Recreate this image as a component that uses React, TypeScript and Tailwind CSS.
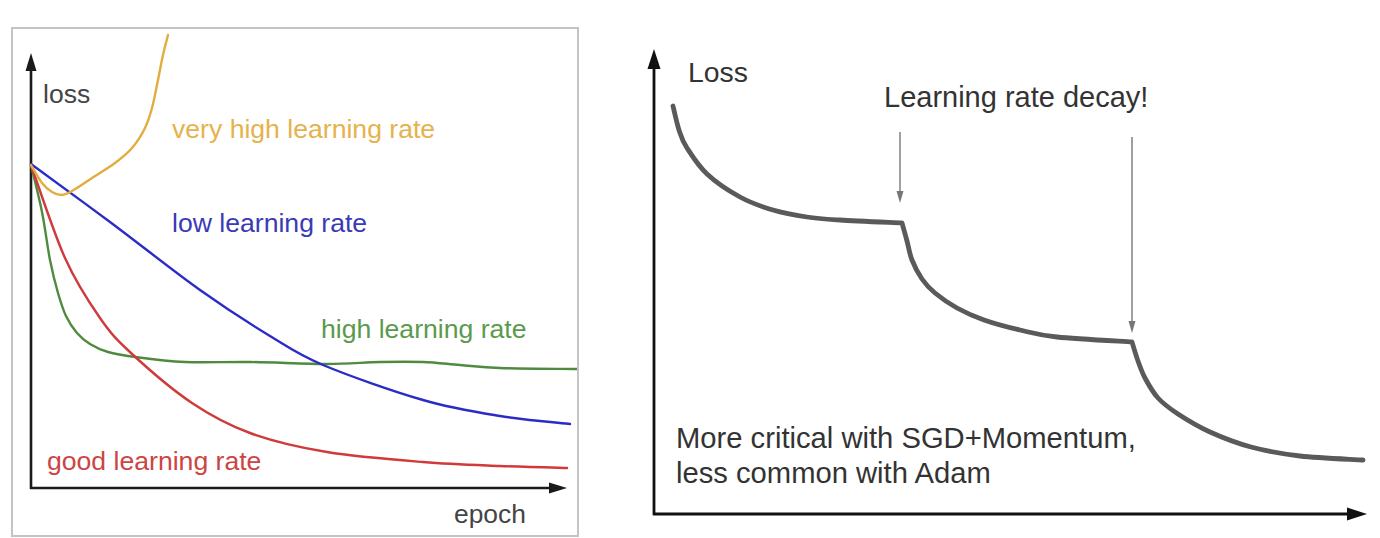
type Pt = [number, number];

// Catmull-Rom through the points, turned into cubic beziers
const smooth = (pts: Pt[], move = true) => {
  let d = move ? `M${pts[0][0]},${pts[0][1]}` : "";
  for (let i = 0; i < pts.length - 1; i++) {
    const p0 = pts[i - 1] || pts[i];
    const p1 = pts[i];
    const p2 = pts[i + 1];
    const p3 = pts[i + 2] || p2;
    const c1x = p1[0] + (p2[0] - p0[0]) / 6;
    const c1y = p1[1] + (p2[1] - p0[1]) / 6;
    const c2x = p2[0] - (p3[0] - p1[0]) / 6;
    const c2y = p2[1] - (p3[1] - p1[1]) / 6;
    d += ` C${c1x.toFixed(1)},${c1y.toFixed(1)} ${c2x.toFixed(1)},${c2y.toFixed(1)} ${p2[0]},${p2[1]}`;
  }
  return d;
};

const yellow: Pt[] = [
  [31, 165], [42, 183], [52, 192], [62, 195], [72, 191], [92, 178], [115, 163],
  [132, 148], [145, 128], [152, 108], [158, 80], [163, 55], [168, 35],
];
const blue: Pt[] = [
  [31, 164], [110, 222], [200, 290], [270, 336], [323, 365], [423, 400],
  [500, 416], [570, 424],
];
const green: Pt[] = [
  [31, 165], [42, 212], [50, 260], [58, 293], [66, 316], [77, 333], [90, 344],
  [108, 352], [135, 357], [185, 362], [250, 362], [327, 364], [380, 362],
  [423, 362], [460, 365], [500, 368], [577, 369],
];
const red: Pt[] = [
  [31, 165], [65, 258], [100, 318], [131, 353], [192, 403], [250, 433],
  [327, 452], [423, 462], [500, 466], [567, 468],
];

const stage1: Pt[] = [
  [673, 106], [679, 130], [687, 148], [707, 174], [740, 197], [773, 210],
  [807, 217], [840, 220], [902, 223],
];
const stage2: Pt[] = [
  [902, 223], [907, 241], [912, 260], [922, 279], [935, 293], [957, 308],
  [984, 320], [1020, 330], [1057, 337], [1132, 342],
];
const stage3: Pt[] = [
  [1132, 342], [1138, 361], [1145, 378], [1158, 398], [1178, 414], [1210, 432],
  [1251, 447], [1300, 456], [1363, 460],
];

const labelFont = { fontFamily: "'Liberation Sans', Arial, sans-serif" };

const LeftChart = () => (
  <div className="mt-[27px] ml-[11px] w-[568px] h-[510px] shrink-0 border-2 border-[#c4c4c4] bg-white">
    <svg width="564" height="506" viewBox="13 29 564 506" className="block" style={labelFont}>
      {/* axes */}
      <line x1="31" y1="489" x2="31" y2="66" stroke="#1a1a1a" strokeWidth="2.6" />
      <polygon points="31,53 25.5,71 36.5,71" fill="#1a1a1a" />
      <line x1="30" y1="488" x2="553" y2="488" stroke="#1a1a1a" strokeWidth="2.6" />
      <polygon points="567,488 549,482.5 549,493.5" fill="#1a1a1a" />

      <path d={smooth(green)} fill="none" stroke="#4f8b3f" strokeWidth="2.4" strokeLinecap="round" />
      <path d={smooth(red)} fill="none" stroke="#cf3a3a" strokeWidth="2.4" strokeLinecap="round" />
      <path d={smooth(blue)} fill="none" stroke="#2b2bc8" strokeWidth="2.4" strokeLinecap="round" />
      <path d={smooth(yellow)} fill="none" stroke="#e2ad3f" strokeWidth="2.4" strokeLinecap="round" />

      <text x="43" y="103" fontSize="26.5" fill="#444">loss</text>
      <text x="172" y="138" fontSize="26.6" fill="#e6b24c">very high learning rate</text>
      <text x="172" y="232" fontSize="26.6" fill="#3a3ab6">low learning rate</text>
      <text x="321" y="338" fontSize="26.6" fill="#5b9a4d">high learning rate</text>
      <text x="47" y="470" fontSize="26.6" fill="#cc4545">good learning rate</text>
      <text x="454" y="523" fontSize="26.4" fill="#444">epoch</text>
    </svg>
  </div>
);

const RightChart = () => (
  <svg width="740" height="538" viewBox="640 0 740 538" className="block ml-[61px] shrink-0" style={labelFont}>
    {/* axes */}
    <line x1="654" y1="515" x2="654" y2="64" stroke="#111" strokeWidth="2.8" />
    <polygon points="654,49 647.5,69 660.5,69" fill="#111" />
    <line x1="653" y1="514" x2="1350" y2="514" stroke="#111" strokeWidth="2.8" />
    <polygon points="1367,514 1347,507.5 1347,520.5" fill="#111" />

    {/* decay markers */}
    <line x1="900" y1="132" x2="900" y2="196" stroke="#777" strokeWidth="1.4" />
    <polygon points="900,203 896.5,191 903.5,191" fill="#777" />
    <line x1="1132" y1="137" x2="1132" y2="326" stroke="#777" strokeWidth="1.4" />
    <polygon points="1132,333 1128.5,321 1135.5,321" fill="#777" />

    <path
      d={`${smooth(stage1)} ${smooth(stage2, false)} ${smooth(stage3, false)}`}
      fill="none"
      stroke="#5a5a5a"
      strokeWidth="4.8"
      strokeLinejoin="round"
      strokeLinecap="round"
    />

    <text x="688" y="82" fontSize="28.4" fill="#333">Loss</text>
    <text x="884" y="107" fontSize="29" fill="#333">Learning rate decay!</text>
    <text x="676" y="448" fontSize="29.2" fill="#333">More critical with SGD+Momentum,</text>
    <text x="676" y="483" fontSize="29.2" fill="#333">less common with Adam</text>
  </svg>
);

export default function App() {
  return (
    <div className="flex items-start w-[1380px] h-[538px] overflow-hidden bg-white">
      <LeftChart />
      <RightChart />
    </div>
  );
}
